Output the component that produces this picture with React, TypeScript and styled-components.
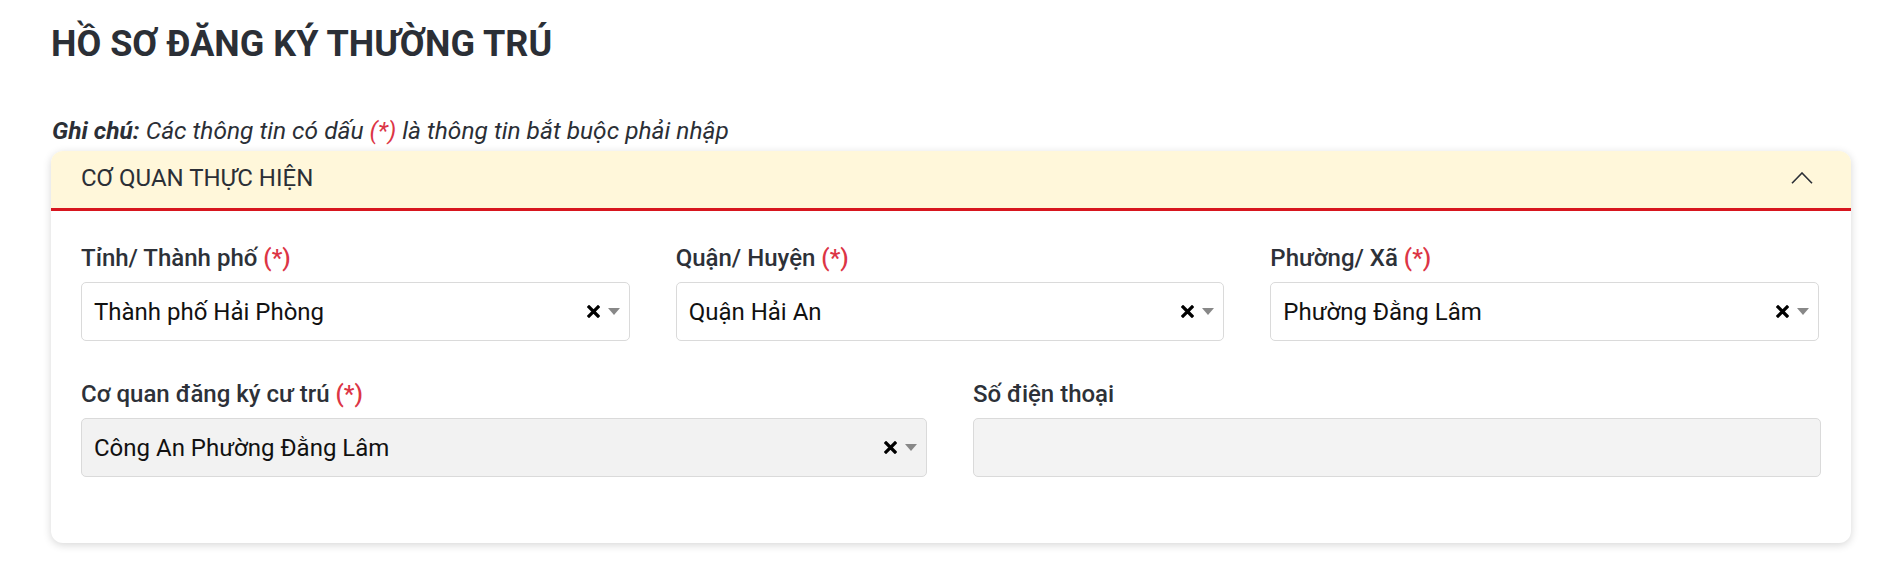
import React from 'react';
import styled, { createGlobalStyle } from 'styled-components';

const GlobalStyle = createGlobalStyle`
  * { box-sizing: border-box; }
  body {
    margin: 0;
    background: #fff;
    font-family: Roboto, "Noto Sans", "Liberation Sans", sans-serif;
    color: #2b2f36;
  }
`;

const Page = styled.div`
  padding: 25px 34px 24px 51px;
`;

const PageTitle = styled.h1`
  margin: 0;
  font-size: 36px;
  line-height: 38px;
  font-weight: 700;
  color: #2b2f36;
`;

const Note = styled.p`
  margin: 53px 0 5px 1px;
  font-size: 24.5px;
  line-height: 30px;
  font-style: italic;
  color: #2b2f36;
`;

const Required = styled.span`
  color: #dc3545;
`;

const Card = styled.section`
  background: #fff;
  border-radius: 12px;
  box-shadow: 0 2px 8px rgba(0, 0, 0, 0.16);
  overflow: hidden;
`;

const CardHeader = styled.div`
  display: flex;
  align-items: center;
  justify-content: space-between;
  height: 60px;
  padding: 0 38px 3px 30px;
  background: #fff7da;
  border-bottom: 3px solid #d7161e;
  font-size: 24px;
  color: #2b2f36;
  text-transform: uppercase;
`;

const CardBody = styled.div`
  display: flex;
  flex-direction: column;
  gap: 39px;
  padding: 33px 32px 66px 30px;
`;

const FieldRow = styled.div<{ $cols: number }>`
  display: grid;
  grid-template-columns: repeat(${p => p.$cols}, 1fr);
  column-gap: 46px;
`;

const Field = styled.div`
  display: flex;
  flex-direction: column;
`;

const Label = styled.label`
  font-size: 24px;
  line-height: 28px;
  font-weight: 500;
  color: #2d3138;
  margin-bottom: 10px;
`;

const SelectBox = styled.div<{ $disabled?: boolean }>`
  display: flex;
  align-items: center;
  height: 59px;
  padding: 0 9px 0 12px;
  border: 1px solid #dadada;
  border-radius: 5px;
  background: ${p => (p.$disabled ? '#f2f2f2' : '#fff')};
`;

const SelectValue = styled.span`
  flex: 1;
  font-size: 24px;
  color: #111;
  white-space: nowrap;
`;

const Clear = styled.svg`
  width: 13px;
  height: 13px;
  margin-right: 8px;
`;

const Arrow = styled.span`
  width: 0;
  height: 0;
  border-style: solid;
  border-width: 7px 6px 0 6px;
  border-color: #888 transparent transparent transparent;
`;

const TextInput = styled.input`
  height: 59px;
  margin-right: -2px;
  padding: 0 12px;
  border: 1px solid #dadada;
  border-radius: 5px;
  background: #f3f3f3;
  font-family: inherit;
  font-size: 24px;
  outline: none;
`;

const ChevronUp = () => (
  <svg width="22" height="12" viewBox="0 0 22 12">
    <polyline points="1,11.2 11,1 21,11.2" fill="none" stroke="#2b2f36" strokeWidth="1.6" />
  </svg>
);

const Select = ({ value, disabled }: { value: string; disabled?: boolean }) => (
  <SelectBox $disabled={disabled}>
    <SelectValue>{value}</SelectValue>
    <Clear viewBox="0 0 13 13">
      <path d="M2 2 L11 11 M11 2 L2 11" stroke="#000" strokeWidth="3.2" strokeLinecap="square" />
    </Clear>
    <Arrow />
  </SelectBox>
);

const FieldLabel = ({ text, required }: { text: string; required?: boolean }) => (
  <Label>
    {text}
    {required && <Required> (*)</Required>}
  </Label>
);

export default function App() {
  return (
    <Page>
      <GlobalStyle />
      <PageTitle>HỒ SƠ ĐĂNG KÝ THƯỜNG TRÚ</PageTitle>
      <Note>
        <b>Ghi chú:</b> Các thông tin có dấu <Required>(*)</Required> là thông tin bắt buộc phải nhập
      </Note>
      <Card>
        <CardHeader>
          <span>Cơ quan thực hiện</span>
          <ChevronUp />
        </CardHeader>
        <CardBody>
          <FieldRow $cols={3}>
            <Field>
              <FieldLabel text="Tỉnh/ Thành phố" required />
              <Select value="Thành phố Hải Phòng" />
            </Field>
            <Field>
              <FieldLabel text="Quận/ Huyện" required />
              <Select value="Quận Hải An" />
            </Field>
            <Field>
              <FieldLabel text="Phường/ Xã" required />
              <Select value="Phường Đằng Lâm" />
            </Field>
          </FieldRow>
          <FieldRow $cols={2}>
            <Field>
              <FieldLabel text="Cơ quan đăng ký cư trú" required />
              <Select value="Công An Phường Đằng Lâm" disabled />
            </Field>
            <Field>
              <FieldLabel text="Số điện thoại" />
              <TextInput disabled />
            </Field>
          </FieldRow>
        </CardBody>
      </Card>
    </Page>
  );
}
